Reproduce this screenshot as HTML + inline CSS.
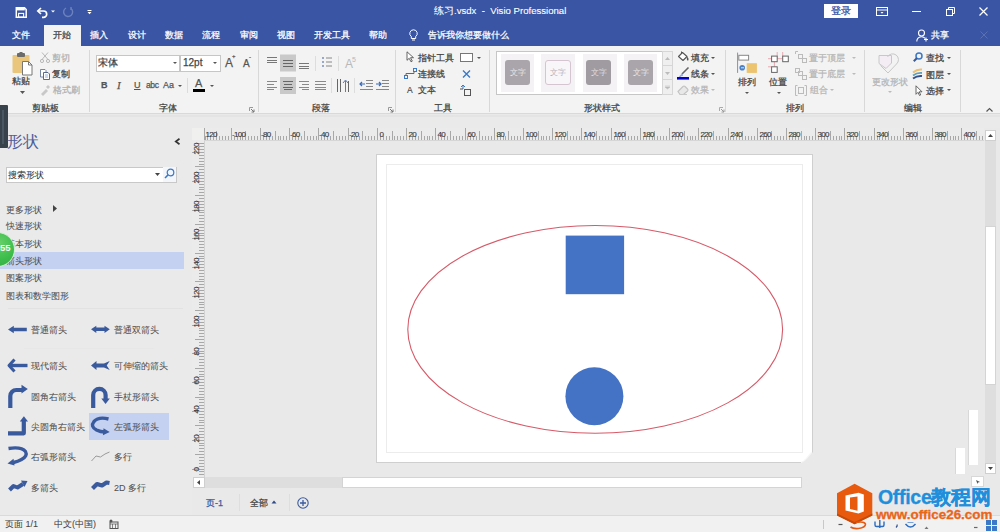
<!DOCTYPE html>
<html><head><meta charset="utf-8">
<style>
*{margin:0;padding:0;box-sizing:border-box}
html,body{width:1000px;height:532px;overflow:hidden;background:#e9e9e9;font-family:"Liberation Sans",sans-serif;color:#444;position:relative}
.a{position:absolute;white-space:nowrap}
.t{position:absolute;white-space:nowrap;font-size:9px;line-height:12px;-webkit-text-stroke:0.25px currentColor}
.w{color:#fff}
svg{position:absolute;overflow:visible}
#top{position:absolute;left:0;top:0;width:1000px;height:46px;background:#3955a3}
#rib{position:absolute;left:0;top:46px;width:1000px;height:68px;background:#f3f3f3;border-bottom:1px solid #d9d9d9}
#ribsh{position:absolute;left:0;top:115px;width:1000px;height:2px;background:#e4e4e4}
.sep{position:absolute;top:50px;width:1px;height:62px;background:#d8d8d8}
.gl{position:absolute;top:102px;font-size:9px;line-height:12px;color:#444;white-space:nowrap}
#pane{position:absolute;left:0;top:117px;width:192px;height:399px;background:#eaeaea}
</style></head><body>
<!-- TITLE BAR -->
<div id="top"></div>
<!-- save icon -->
<svg style="left:15px;top:7px" width="12" height="11" viewBox="0 0 12 11"><path d="M1.3 0.8h8.2l1.7 1.7v7.7H1.3z" fill="none" stroke="#fff" stroke-width="1.5"/><rect x="1.3" y="0.8" width="8.5" height="2.6" fill="#fff"/><rect x="3.6" y="6.4" width="5" height="3.8" fill="none" stroke="#fff" stroke-width="1.1"/></svg>
<!-- undo -->
<svg style="left:36px;top:7px" width="13" height="11" viewBox="0 0 13 11"><path d="M2.5 4h5a3.2 3.2 0 0 1 0 6.4H6" fill="none" stroke="#fff" stroke-width="1.7"/><path d="M5 1L1.8 4 5 7" fill="none" stroke="#fff" stroke-width="1.7"/></svg>
<svg style="left:51px;top:10px" width="4" height="3" viewBox="0 0 4 3"><path d="M0 0.5h4L2 2.5z" fill="#fff"/></svg>
<!-- redo disabled -->
<svg style="left:62px;top:6px" width="12" height="12" viewBox="0 0 12 12"><path d="M9 2.5A4.5 4.5 0 1 1 4 2" fill="none" stroke="#6c82be" stroke-width="1.4"/><path d="M9 1v3" stroke="#6c82be" stroke-width="1.4"/></svg>
<svg style="left:87px;top:10px" width="5" height="5" viewBox="0 0 5 5"><path d="M0.5 0.5h4" stroke="#fff" stroke-width="1"/><path d="M0.5 2h4L2.5 4.2z" fill="#fff"/></svg>
<div class="t w" style="left:434px;top:4px;font-size:9.6px;line-height:13px;-webkit-text-stroke:0.1px #fff">练习.vsdx&nbsp; - &nbsp;Visio Professional</div>
<div class="a" style="left:824px;top:4px;width:34px;height:14px;background:#fff;color:#3955a3;font-size:9.5px;line-height:14px;text-align:center;-webkit-text-stroke:0.3px #3955a3">登录</div>
<svg style="left:876px;top:7px" width="12" height="9" viewBox="0 0 12 9"><rect x="0.5" y="0.5" width="11" height="8" fill="none" stroke="#fff"/><path d="M0.5 3h11" stroke="#fff"/><path d="M4.5 5h3L6 6.8z" fill="#fff"/></svg>
<div class="a" style="left:912px;top:11px;width:9px;height:1px;background:#fff"></div>
<svg style="left:946px;top:7px" width="9" height="9" viewBox="0 0 9 9"><rect x="0.5" y="2.5" width="6" height="6" fill="none" stroke="#fff"/><path d="M2.5 2.5V0.5h6v6h-2" fill="none" stroke="#fff"/></svg>
<svg style="left:979px;top:7px" width="9" height="9" viewBox="0 0 9 9"><path d="M0.5 0.5l8 8M8.5 0.5l-8 8" stroke="#fff" stroke-width="1.2"/></svg>
<!-- TABS -->
<div class="a" style="left:44px;top:25px;width:37px;height:22px;background:#f3f3f3"></div>
<div class="t w" style="left:12px;top:29px">文件</div>
<div class="t" style="left:53px;top:29px;color:#444">开始</div>
<div class="t w" style="left:90px;top:29px">插入</div>
<div class="t w" style="left:128px;top:29px">设计</div>
<div class="t w" style="left:165px;top:29px">数据</div>
<div class="t w" style="left:202px;top:29px">流程</div>
<div class="t w" style="left:240px;top:29px">审阅</div>
<div class="t w" style="left:277px;top:29px">视图</div>
<div class="t w" style="left:314px;top:29px">开发工具</div>
<div class="t w" style="left:369px;top:29px">帮助</div>
<svg style="left:409px;top:29px" width="9" height="13" viewBox="0 0 9 13"><path d="M4.5 0.8a3.7 3.7 0 0 0-2.2 6.7V9.5h4.4V7.5A3.7 3.7 0 0 0 4.5 0.8z" fill="none" stroke="#fff" stroke-width="1"/><path d="M3 11h3" stroke="#fff"/></svg>
<div class="t w" style="left:428px;top:29px">告诉我你想要做什么</div>
<svg style="left:916px;top:29px" width="13" height="13" viewBox="0 0 13 13"><circle cx="5.5" cy="4" r="3" fill="none" stroke="#fff" stroke-width="1.1"/><path d="M0.8 12.5a4.8 4.8 0 0 1 8.5-3" fill="none" stroke="#fff" stroke-width="1.1"/><path d="M10 8.5v4M8 10.5h4" stroke="#fff" stroke-width="1.1"/></svg>
<div class="t w" style="left:931px;top:29px">共享</div>
<svg style="left:980px;top:31px" width="8" height="8" viewBox="0 0 8 8"><path d="M0.5 0.5l7 7M7.5 0.5l-7 7" stroke="#5a70b0" stroke-width="1"/></svg>

<!-- RIBBON -->
<div id="rib"></div>
<div id="ribsh"></div>
<!-- clipboard group -->
<svg style="left:12px;top:52px" width="21" height="24" viewBox="0 0 21 24"><rect x="0.5" y="3" width="17" height="18" rx="1" fill="#e9c67c"/><rect x="5" y="1" width="8" height="4" rx="1" fill="#6b6b6b"/><rect x="7.5" y="0" width="3" height="2" fill="#6b6b6b"/><path d="M10.5 9.5h6l3.5 3.5v10h-9.5z" fill="#fff" stroke="#777" stroke-width="1"/><path d="M16.5 9.5v3.5h3.5" fill="none" stroke="#777"/></svg>
<div class="t" style="left:12px;top:75px">粘贴</div>
<svg style="left:20px;top:91px" width="5" height="3" viewBox="0 0 5 3"><path d="M0 0h5L2.5 3z" fill="#555"/></svg>
<svg style="left:40px;top:52px" width="10" height="11" viewBox="0 0 10 11"><path d="M2 0.5l6 7M8 0.5l-6 7" stroke="#b8b8b8" stroke-width="1"/><circle cx="2" cy="9" r="1.6" fill="none" stroke="#b8b8b8"/><circle cx="8" cy="9" r="1.6" fill="none" stroke="#b8b8b8"/></svg>
<div class="t" style="left:52px;top:52px;color:#b0b0b0">剪切</div>
<svg style="left:40px;top:69px" width="10" height="11" viewBox="0 0 10 11"><path d="M0.5 0.5h4.5l1 1v6.5H0.5z" fill="#fff" stroke="#6a7a98" stroke-width="0.9"/><path d="M3.5 3.5h4.5l1.5 1.5v5.5h-6z" fill="#fff" stroke="#4a5a80" stroke-width="0.9"/><path d="M5 6h3M5 8h3" stroke="#7a9ad0" stroke-width="0.8"/></svg>
<div class="t" style="left:52px;top:68px">复制</div>
<svg style="left:40px;top:85px" width="10" height="10" viewBox="0 0 10 10"><path d="M1 9l5-5 2 2-5 5z" fill="#c8c8c8"/><path d="M6 2l2-2 2 2-2 2z" fill="#c8c8c8"/></svg>
<div class="t" style="left:53px;top:84px;color:#b0b0b0">格式刷</div>
<div class="t" style="left:32px;top:102px">剪贴板</div>
<div class="sep" style="left:89px"></div>
<!-- font group -->
<div class="a" style="left:96px;top:55px;width:84px;height:17px;background:#fff;border:1px solid #c6c6c6"></div>
<div class="t" style="left:98px;top:57px;font-size:10px">宋体</div>
<svg style="left:173px;top:62px" width="4" height="2" viewBox="0 0 4 2"><path d="M0 0h4L2 2z" fill="#555"/></svg>
<div class="a" style="left:180px;top:55px;width:41px;height:17px;background:#fff;border:1px solid #c6c6c6"></div>
<div class="t" style="left:183px;top:57px;font-size:10px">12pt</div>
<svg style="left:213px;top:62px" width="4" height="2" viewBox="0 0 4 2"><path d="M0 0h4L2 2z" fill="#555"/></svg>
<div class="t" style="left:225px;top:56px;font-size:12px;line-height:14px;color:#555">A</div>
<div class="t" style="left:232px;top:53px;font-size:6px;line-height:7px;color:#555">+</div>
<div class="t" style="left:243px;top:58px;font-size:10px;line-height:12px;color:#555">A</div>
<div class="t" style="left:249px;top:54px;font-size:6px;line-height:7px;color:#555">-</div>
<div class="t" style="left:101px;top:79px;font-weight:bold;color:#555">B</div>
<div class="t" style="left:117px;top:79px;font-style:italic;font-family:'Liberation Serif',serif;color:#555;font-size:11px">I</div>
<div class="t" style="left:134px;top:79px;text-decoration:underline;color:#555">U</div>
<div class="t" style="left:146px;top:79px;color:#555;font-size:8.5px;letter-spacing:-0.4px">abc</div>
<div class="t" style="left:163px;top:79px;color:#555">Aa</div>
<svg style="left:178px;top:85px" width="4" height="2" viewBox="0 0 4 2"><path d="M0 0h4L2 2z" fill="#555"/></svg>
<div class="a" style="left:187px;top:78px;width:1px;height:15px;background:#dcdcdc"></div>
<div class="t" style="left:195px;top:77px;color:#555;font-size:11px">A</div>
<div class="a" style="left:193px;top:89px;width:12px;height:2.5px;background:#000"></div>
<svg style="left:210px;top:85px" width="4" height="2" viewBox="0 0 4 2"><path d="M0 0h4L2 2z" fill="#555"/></svg>
<div class="t" style="left:159px;top:102px">字体</div>
<svg style="left:249px;top:107px" width="5" height="5" viewBox="0 0 5 5"><path d="M0.5 4V0.5H4" fill="none" stroke="#999"/><path d="M2 2l3 3M5 2.5V5H2.5" fill="none" stroke="#777"/></svg>
<div class="sep" style="left:258px"></div>
<!-- paragraph group -->
<svg style="left:266px;top:54px" width="128" height="42" viewBox="0 0 128 42">
 <g stroke="#777" stroke-width="1">
  <path d="M1 3.5h10M1 6.5h10M1 8.5h10"/>
 </g>
 <rect x="14" y="0.5" width="16" height="17" fill="#c9c9c9"/>
 <g stroke="#666" stroke-width="1"><path d="M17 6.5h10M17 9.5h10M17 12.5h10"/></g>
 <g stroke="#777" stroke-width="1"><path d="M33 9.5h10M33 12.5h10M33 14.5h10"/></g>
 <path d="M49.5 2v15" stroke="#ddd"/>
 <g fill="#7a8fb8"><circle cx="57" cy="4" r="1"/><circle cx="57" cy="8" r="1"/><circle cx="57" cy="12" r="1"/></g>
 <g stroke="#888"><path d="M60 4h6M60 8h6M60 12h6"/></g>
 <path d="M72.5 2v15" stroke="#ddd"/>
 <text x="79" y="14" font-size="12" fill="#b8b8b8" font-family="Liberation Sans">A</text>
 <text x="86" y="8" font-size="7" fill="#b8b8b8" font-family="Liberation Sans">5</text>
 <g stroke="#888"><path d="M1 27.5h10M1 30.5h7M1 33.5h10M1 35.5h7"/></g>
 <rect x="14" y="23" width="16" height="17" fill="#c9c9c9"/>
 <g stroke="#666"><path d="M17 27.5h10M18 30.5h8M17 33.5h10M18 35.5h8"/></g>
 <g stroke="#888"><path d="M33 27.5h10M36 30.5h7M33 33.5h10M36 35.5h7"/></g>
 <g stroke="#888"><path d="M49 27.5h11M49 30.5h11M49 33.5h11M49 35.5h11"/></g>
 <path d="M65.5 24v15" stroke="#ddd"/>
 <g stroke="#666"><path d="M71.5 25v13M74.5 25v13"/></g>
 <path d="M79.5 38v-11M77 29l2.5-3 2.5 3" fill="none" stroke="#5a7ab8"/><path d="M82.5 38v-11" stroke="#666"/>
 <path d="M88.5 24v15" stroke="#ddd"/>
 <g stroke="#888"><path d="M100 26.5h7M100 29.5h7M100 32.5h7M94 35.5h13"/></g>
 <path d="M99 30h-5M96 28l-2 2 2 2" fill="none" stroke="#3a6ab8" stroke-width="1.2"/>
 <g stroke="#888"><path d="M116 26.5h7M116 29.5h7M116 32.5h7M110 35.5h13"/></g>
 <path d="M110 30h5M113 28l2 2-2 2" fill="none" stroke="#3a6ab8" stroke-width="1.2"/>
</svg>
<div class="t" style="left:312px;top:102px">段落</div>
<svg style="left:388px;top:107px" width="5" height="5" viewBox="0 0 5 5"><path d="M0.5 4V0.5H4" fill="none" stroke="#999"/><path d="M2 2l3 3M5 2.5V5H2.5" fill="none" stroke="#777"/></svg>
<div class="sep" style="left:395px"></div>
<!-- tools group -->
<svg style="left:406px;top:51px" width="9" height="11" viewBox="0 0 9 11"><path d="M1 0.8v8.5l2.2-2 1.8 3.5 1.3-.7-1.8-3.4h3z" fill="#fff" stroke="#555" stroke-width="0.9"/></svg>
<div class="t" style="left:418px;top:52px">指针工具</div>
<div class="a" style="left:460px;top:53px;width:13px;height:9px;border:1px solid #777;background:#fff"></div>
<svg style="left:477px;top:57px" width="4" height="2" viewBox="0 0 4 2"><path d="M0 0h4L2 2z" fill="#555"/></svg>
<svg style="left:404px;top:68px" width="13" height="12" viewBox="0 0 13 12"><rect x="0.5" y="7.5" width="3" height="3" fill="none" stroke="#3a78c8"/><rect x="9.5" y="0.5" width="3" height="3" fill="none" stroke="#3a78c8"/><path d="M2 7.5V5.5h8V3.5" fill="none" stroke="#666"/></svg>
<div class="t" style="left:418px;top:68px">连接线</div>
<svg style="left:462px;top:70px" width="9" height="8" viewBox="0 0 9 8"><path d="M1 0.5l7 7M8 0.5l-7 7" stroke="#3a78c8" stroke-width="1.4"/></svg>
<div class="t" style="left:407px;top:84px;font-size:8.5px;color:#444;-webkit-text-stroke:0.15px #444">A</div>
<div class="t" style="left:418px;top:84px">文本</div>
<svg style="left:460px;top:85px" width="12" height="12" viewBox="0 0 12 12"><rect x="4.5" y="4.5" width="6" height="6" fill="none" stroke="#555"/><path d="M3 0v4M1 2l2-2 2 2" fill="none" stroke="#3a78c8"/><path d="M0 4h3" stroke="#555"/></svg>
<div class="t" style="left:434px;top:102px">工具</div>
<div class="sep" style="left:489px"></div>
<!-- shape styles -->
<div class="a" style="left:496px;top:51px;width:177px;height:44px;background:#fff;border:1px solid #c6c6c6"></div>
<div class="a" style="left:501px;top:54px;width:33px;height:38px;background:#f5f2f5"></div>
<div class="a" style="left:541px;top:54px;width:34px;height:38px;background:#f5f2f5"></div>
<div class="a" style="left:583px;top:54px;width:34px;height:38px;background:#f5f2f5"></div>
<div class="a" style="left:624px;top:54px;width:33px;height:38px;background:#f5f2f5"></div>
<div class="a" style="left:505px;top:60px;width:25px;height:25px;background:#a9a5aa;border-radius:3px;color:#e8e6e8;font-size:7.5px;line-height:25px;text-align:center">文字</div>
<div class="a" style="left:545px;top:60px;width:26px;height:25px;background:#f9f6f9;border:1px solid #d5c5d0;border-radius:3px;color:#b8b0b8;font-size:7.5px;line-height:23px;text-align:center">文字</div>
<div class="a" style="left:586px;top:60px;width:25px;height:25px;background:#9f9ba0;border-radius:3px;color:#e0dde0;font-size:7.5px;line-height:25px;text-align:center">文字</div>
<div class="a" style="left:628px;top:60px;width:25px;height:25px;background:#a9a5aa;border-radius:3px;color:#e8e6e8;font-size:7.5px;line-height:25px;text-align:center">文字</div>
<div class="a" style="left:662px;top:51px;width:11px;height:15px;background:#efefef;border:1px solid #d6d6d6"></div>
<div class="a" style="left:662px;top:65px;width:11px;height:15px;background:#efefef;border:1px solid #d6d6d6"></div>
<div class="a" style="left:662px;top:79px;width:11px;height:16px;background:#efefef;border:1px solid #d6d6d6"></div>
<svg style="left:665px;top:57px" width="5" height="3"><path d="M0 3h5L2.5 0z" fill="#bbb"/></svg>
<svg style="left:665px;top:72px" width="5" height="3"><path d="M0 0h5L2.5 3z" fill="#bbb"/></svg>
<svg style="left:665px;top:86px" width="5" height="3"><path d="M0 0h5M0 1h5L2.5 3z" stroke="#bbb" stroke-width="0.5" fill="#bbb"/></svg>
<svg style="left:677px;top:50px" width="13" height="12" viewBox="0 0 13 12"><path d="M4.5 1.5v3" stroke="#555" stroke-width="1"/><path d="M1.5 6.5L5.5 2.5 10 6.5 6 10.5z" fill="#fff" stroke="#555" stroke-width="1.1" stroke-linejoin="round"/><path d="M10 6.5q2 1.5 1.5 3.5q-.8 1-1.5 0q-.5-1.5 0-3.5z" fill="#555"/></svg>
<div class="t" style="left:691px;top:52px">填充</div>
<svg style="left:711px;top:57px" width="4" height="2"><path d="M0 0h4L2 2z" fill="#555"/></svg>
<svg style="left:677px;top:67px" width="13" height="13" viewBox="0 0 13 13"><path d="M11.5 0.5L5 7" stroke="#666" stroke-width="1.6"/><path d="M5 7L2.5 10l3.5-1.8z" fill="#4a6ac8"/><path d="M2.5 10l3-3" stroke="#9fb0e0" stroke-width="1.6"/><rect x="0" y="10" width="12" height="2.6" fill="#0000c8"/></svg>
<div class="t" style="left:691px;top:68px">线条</div>
<svg style="left:711px;top:73px" width="4" height="2"><path d="M0 0h4L2 2z" fill="#555"/></svg>
<svg style="left:677px;top:85px" width="12" height="11" viewBox="0 0 12 11"><path d="M1 6.5L6 1.5q1-1 2 0l2.5 2.5q1 1 0 2L6.5 9.5H3z" fill="#e8e8e8" stroke="#c2c2c2" stroke-width="1.1"/><path d="M3 9.5h7" stroke="#c8c8c8"/></svg>
<div class="t" style="left:691px;top:84px;color:#b5b5b5">效果</div>
<svg style="left:711px;top:89px" width="4" height="2"><path d="M0 0h4L2 2z" fill="#bbb"/></svg>
<div class="t" style="left:584px;top:102px">形状样式</div>
<svg style="left:719px;top:107px" width="5" height="5" viewBox="0 0 5 5"><path d="M0.5 4V0.5H4" fill="none" stroke="#aaa"/><path d="M2 2l3 3M5 2.5V5H2.5" fill="none" stroke="#999"/></svg>
<div class="sep" style="left:725px"></div>
<!-- arrange -->
<svg style="left:736px;top:52px" width="22" height="22" viewBox="736 52 22 22"><path d="M737.6 52.6v20.3" stroke="#8090b8" stroke-width="1"/><rect x="738.8" y="55.3" width="9.8" height="4.8" fill="#fff" stroke="#888" stroke-width="1"/><rect x="746.7" y="63.2" width="10.2" height="9.7" fill="#ecc36e"/><circle cx="742.2" cy="67.8" r="2.8" fill="#4a80c8"/><path d="M741 67.8h3" stroke="#fff" stroke-width="0.8"/></svg>
<div class="t" style="left:738px;top:76px">排列</div>
<svg style="left:745px;top:92px" width="4" height="2"><path d="M0 0h4L2 2z" fill="#555"/></svg>
<svg style="left:767px;top:51px" width="23" height="23" viewBox="767 51 23 23"><g stroke="#e9a0a8" stroke-width="0.9" fill="none"><path d="M768 58.7h14.5M777.2 52v6.7M782.7 52v6.7M768 66.8h3.6M774.4 61.7v5"/></g><g fill="#fff" stroke="#666" stroke-width="1"><rect x="771.6" y="56.1" width="5.6" height="5.6"/><rect x="782.7" y="56.1" width="5.6" height="5.6"/><rect x="771.6" y="66.8" width="5.6" height="5.6"/></g></svg>
<div class="t" style="left:769px;top:76px">位置</div>
<svg style="left:777px;top:92px" width="4" height="2"><path d="M0 0h4L2 2z" fill="#555"/></svg>
<svg style="left:795px;top:51px" width="12" height="12" viewBox="0 0 12 12"><path d="M0.5 3V0.5H3" fill="none" stroke="#bbb"/><rect x="3.5" y="3.5" width="4" height="4" fill="none" stroke="#bbb"/><rect x="7.5" y="7.5" width="4" height="4" fill="none" stroke="#bbb"/></svg>
<div class="t" style="left:809px;top:52px;color:#b5b5b5">置于顶层</div>
<svg style="left:852px;top:57px" width="4" height="2"><path d="M0 0h4L2 2z" fill="#bbb"/></svg>
<svg style="left:795px;top:68px" width="12" height="12" viewBox="0 0 12 12"><rect x="0.5" y="0.5" width="4" height="4" fill="none" stroke="#bbb"/><rect x="3.5" y="3.5" width="4" height="4" fill="none" stroke="#bbb"/><rect x="7.5" y="7.5" width="4" height="4" fill="none" stroke="#bbb"/></svg>
<div class="t" style="left:809px;top:68px;color:#b5b5b5">置于底层</div>
<svg style="left:852px;top:73px" width="4" height="2"><path d="M0 0h4L2 2z" fill="#bbb"/></svg>
<svg style="left:795px;top:85px" width="12" height="11" viewBox="0 0 12 11"><path d="M2.5 0.5h-2v10h2M9.5 0.5h2v10h-2" fill="none" stroke="#bbb"/><rect x="3.5" y="2.5" width="5" height="6" fill="none" stroke="#bbb"/></svg>
<div class="t" style="left:810px;top:84px;color:#b5b5b5">组合</div>
<svg style="left:830px;top:89px" width="4" height="2"><path d="M0 0h4L2 2z" fill="#bbb"/></svg>
<div class="t" style="left:786px;top:102px">排列</div>
<div class="sep" style="left:864px"></div>
<!-- editing -->
<svg style="left:876px;top:50px" width="26" height="26" viewBox="876 50 26 26"><path d="M879 55.5h12.5v7.5L886 68.5 879 63.5z" fill="#f4eef4" stroke="#c8c8c8" stroke-width="1"/><path d="M888 73l-7.5-7.5 M888 73l8.5-9a5.8 5.8 0 1 0-9-7" fill="none" stroke="#c8c8c8" stroke-width="1"/></svg>
<div class="t" style="left:872px;top:76px;color:#b5b5b5">更改形状</div>
<svg style="left:888px;top:91px" width="4" height="2"><path d="M0 0h4L2 2z" fill="#bbb"/></svg>
<svg style="left:913px;top:52px" width="10" height="10" viewBox="0 0 10 10"><circle cx="6" cy="4" r="3" fill="none" stroke="#3a78c8" stroke-width="1.5"/><path d="M4 6L0.8 9.2" stroke="#3a5a98" stroke-width="2"/></svg>
<div class="t" style="left:926px;top:52px">查找</div>
<svg style="left:947px;top:57px" width="4" height="2"><path d="M0 0h4L2 2z" fill="#555"/></svg>
<svg style="left:912px;top:68px" width="11" height="12" viewBox="0 0 11 12"><path d="M1 4.5q4-3.5 9-3" stroke="#f0c070" stroke-width="2" fill="none"/><path d="M1 7.5q4-3 9-2.5" stroke="#5aa0c0" stroke-width="1.8" fill="none"/><path d="M1 10.5q4-3 9-2.5" stroke="#34508a" stroke-width="1.9" fill="none"/></svg>
<div class="t" style="left:926px;top:69px">图层</div>
<svg style="left:947px;top:73px" width="4" height="2"><path d="M0 0h4L2 2z" fill="#555"/></svg>
<svg style="left:915px;top:85px" width="8" height="11" viewBox="0 0 8 11"><path d="M1 0.8v8.5l2-2 1.5 3.2 1.2-.6-1.5-3.1h2.8z" fill="#fff" stroke="#555" stroke-width="0.9"/></svg>
<div class="t" style="left:926px;top:85px">选择</div>
<svg style="left:947px;top:89px" width="4" height="2"><path d="M0 0h4L2 2z" fill="#555"/></svg>
<div class="t" style="left:904px;top:102px">编辑</div>
<div class="sep" style="left:960px"></div>
<svg style="left:986px;top:108px" width="7" height="4" viewBox="0 0 7 4"><path d="M0.5 3.5l3-3 3 3" fill="none" stroke="#555" stroke-width="1.2"/></svg>

<div id="pane"></div>
<div class="a" style="left:0;top:105px;width:8px;height:43px;background:#38424c;border-radius:0 1px 1px 0"></div>
<div class="a" style="left:2px;top:110px;width:2px;height:34px;background:#4a5662"></div>
<div class="a" style="left:7px;top:133px;font-size:16px;line-height:18px;color:#4f5e9c">形状</div>
<svg style="left:174px;top:138px" width="7" height="7" viewBox="0 0 7 7"><path d="M5.5 0.8L1.8 3.5 5.5 6.2" fill="none" stroke="#333" stroke-width="1.7"/></svg>
<div class="a" style="left:6px;top:167px;width:171px;height:16px;background:#fff;border:1px solid #c8c8c8"></div>
<div class="t" style="left:8px;top:169px;font-size:9px;-webkit-text-stroke:0.05px currentColor;color:#505050;color:#333">搜索形状</div>
<svg style="left:155px;top:173px" width="5" height="3"><path d="M0 0h5L2.5 3z" fill="#444"/></svg>
<div class="a" style="left:163px;top:167px;width:13px;height:15px;background:#f3f6fa"></div>
<svg style="left:164px;top:168px" width="11" height="11" viewBox="0 0 11 11"><circle cx="6.5" cy="4.5" r="3.3" fill="none" stroke="#3a78c8" stroke-width="1.2"/><path d="M4.2 6.8L1 10" stroke="#3a78c8" stroke-width="1.6"/></svg>
<div class="t" style="left:6px;top:204px;font-size:9px;-webkit-text-stroke:0.05px currentColor;color:#505050">更多形状</div>
<svg style="left:53px;top:205px" width="4" height="7"><path d="M0 0v7l4-3.5z" fill="#444"/></svg>
<div class="t" style="left:6px;top:220px;font-size:9px;-webkit-text-stroke:0.05px currentColor;color:#505050">快速形状</div>
<div class="t" style="left:6px;top:238px;font-size:9px;-webkit-text-stroke:0.05px currentColor;color:#505050">基本形状</div>
<div class="a" style="left:0;top:252px;width:184px;height:17px;background:#c5d1f0"></div>
<div class="t" style="left:6px;top:255px;font-size:9px;-webkit-text-stroke:0.05px currentColor;color:#505050">箭头形状</div>
<div class="t" style="left:6px;top:272px;font-size:9px;-webkit-text-stroke:0.05px currentColor;color:#505050">图案形状</div>
<div class="t" style="left:6px;top:290px;font-size:9px;-webkit-text-stroke:0.05px currentColor;color:#505050">图表和数学图形</div>
<div class="a" style="left:-20px;top:232px;width:35px;height:35px;border-radius:50%;background:radial-gradient(circle at 55% 30%,#66d068,#3dbd4c 55%,#32a840);border:1.5px solid #cfeecf"></div>
<div class="t" style="left:0px;top:242px;font-size:9.5px;font-weight:bold;color:#f4fff4;-webkit-text-stroke:0">55</div>
<div class="a" style="left:8px;top:308px;width:175px;height:1px;background:#e2e2e2"></div>
<div class="a" style="left:24px;top:348px;width:130px;height:1px;background:#e7e7e7"></div>
<div class="a" style="left:89px;top:413px;width:80px;height:27px;background:#c5d1f0"></div>
<!-- shape icons -->
<svg style="left:0;top:300px" width="185" height="200" viewBox="0 300 185 200">
 <g fill="#3a5a9e">
  <path d="M8 329.5l5.8-3.8v2h13v3.6h-13v2z"/>
  <path d="M91 329.3l5.3-3.6v1.8h8.2v-1.8l5.3 3.6-5.3 3.6v-1.8h-8.2v1.8z"/>
  <path d="M91 365.5l5.5-4.5v2.6h7.5l5.7-2.5-3 4.4 3 4.4-5.7-2.5h-7.5v2.6z"/>
  <path d="M21.5 384.8l6.3 4.3-6.3 4.3z"/>
  <path d="M101.3 398.5h8.5l-4.25 5.5z"/>
  <path d="M19.8 421.5l4.1-5.2 4.1 5.2z"/>
  <path d="M103.5 428.3l6.2 3.7-6.8 3.2z"/>
  <path d="M13.5 458.8l-6 4.6 7 2.2z"/>
  <path d="M21 480.5l6.5 0.5-3 6z"/>
 </g>
 <g fill="none" stroke="#3a5a9e" stroke-linejoin="round">
  <path d="M9.5 365.5h18" stroke-width="3.4"/>
  <path d="M14.5 359.5l-5.5 6 5.5 6" stroke-width="3"/>
  <path d="M10.3 408v-12a6 6 0 0 1 6-6h6" stroke-width="4.2"/>
  <path d="M93.2 408v-13a6.2 6.2 0 0 1 12.4 0v4" stroke-width="4.2"/>
  <path d="M8 433.3h15.8v-12.5" stroke-width="4.2"/>
  <path d="M108.5 419q-10-2.5-14.5 2.5q-4 5 2.5 8.5q4 2 8.5 2" stroke-width="3.4"/>
  <path d="M8.5 448.5q13-2 17 3q2.5 4.5-4 8q-3.5 2-8 3" stroke-width="3.4"/>
  <path d="M9.5 490l4-4 4 1.5 5.5-3.5" stroke-width="4"/>
  <path d="M92.5 488.5l4.5-4.5 5 1.5 4.5-3 3 .5" stroke-width="4.2"/>
 </g>
 <path d="M91.5 461l4.5-5 4.5 1 4.5-3 4.5-2" fill="none" stroke="#9a9a9a" stroke-width="1"/>
</svg>
<div class="t" style="left:31px;top:324px;font-size:9px;-webkit-text-stroke:0.05px currentColor;color:#505050">普通箭头</div>
<div class="t" style="left:114px;top:324px;font-size:9px;-webkit-text-stroke:0.05px currentColor;color:#505050">普通双箭头</div>
<div class="t" style="left:31px;top:360px;font-size:9px;-webkit-text-stroke:0.05px currentColor;color:#505050">现代箭头</div>
<div class="t" style="left:114px;top:360px;font-size:9px;-webkit-text-stroke:0.05px currentColor;color:#505050">可伸缩的箭头</div>
<div class="t" style="left:31px;top:391px;font-size:9px;-webkit-text-stroke:0.05px currentColor;color:#505050">圆角右箭头</div>
<div class="t" style="left:114px;top:391px;font-size:9px;-webkit-text-stroke:0.05px currentColor;color:#505050">手杖形箭头</div>
<div class="t" style="left:31px;top:421px;font-size:9px;-webkit-text-stroke:0.05px currentColor;color:#505050">尖圆角右箭头</div>
<div class="t" style="left:114px;top:421px;font-size:9px;-webkit-text-stroke:0.05px currentColor;color:#505050">左弧形箭头</div>
<div class="t" style="left:31px;top:451px;font-size:9px;-webkit-text-stroke:0.05px currentColor;color:#505050">右弧形箭头</div>
<div class="t" style="left:114px;top:451px;font-size:9px;-webkit-text-stroke:0.05px currentColor;color:#505050">多行</div>
<div class="t" style="left:31px;top:482px;font-size:9px;-webkit-text-stroke:0.05px currentColor;color:#505050">多箭头</div>
<div class="t" style="left:114px;top:482px;font-size:9px;-webkit-text-stroke:0.05px currentColor;color:#505050">2D 多行</div>

<!-- RULERS -->
<div class="a" style="left:192px;top:117px;width:808px;height:11px;background:#eaeaea"></div>
<div class="a" style="left:192px;top:128px;width:792px;height:13px;background:#ebebeb"></div>
<div class="a" style="left:192px;top:128px;width:12px;height:352px;background:#ebebeb"></div>
<div class="a" style="left:192px;top:128px;width:12px;height:12px;background:#f0f0ee"></div>
<svg id="rulers" style="left:0;top:0" width="1000" height="532" viewBox="0 0 1000 532">
<g stroke="#a8a8a8" stroke-width="1" shape-rendering="crispEdges">
<path d="M204.5 128V140"/>
<path d="M205.5 136V140"/>
<path d="M207.5 136V140"/>
<path d="M210.5 136V140"/>
<path d="M213.5 136V140"/>
<path d="M216.5 130.5V140"/>
<path d="M219.5 136V140"/>
<path d="M222.5 136V140"/>
<path d="M225.5 136V140"/>
<path d="M228.5 136V140"/>
<path d="M231.5 128V140"/>
<path d="M234.5 136V140"/>
<path d="M237.5 136V140"/>
<path d="M240.5 136V140"/>
<path d="M242.5 136V140"/>
<path d="M245.5 130.5V140"/>
<path d="M248.5 136V140"/>
<path d="M251.5 136V140"/>
<path d="M254.5 136V140"/>
<path d="M257.5 136V140"/>
<path d="M260.5 128V140"/>
<path d="M263.5 136V140"/>
<path d="M266.5 136V140"/>
<path d="M269.5 136V140"/>
<path d="M272.5 136V140"/>
<path d="M275.5 130.5V140"/>
<path d="M278.5 136V140"/>
<path d="M280.5 136V140"/>
<path d="M283.5 136V140"/>
<path d="M286.5 136V140"/>
<path d="M289.5 128V140"/>
<path d="M292.5 136V140"/>
<path d="M295.5 136V140"/>
<path d="M298.5 136V140"/>
<path d="M301.5 136V140"/>
<path d="M304.5 130.5V140"/>
<path d="M307.5 136V140"/>
<path d="M310.5 136V140"/>
<path d="M313.5 136V140"/>
<path d="M316.5 136V140"/>
<path d="M318.5 128V140"/>
<path d="M321.5 136V140"/>
<path d="M324.5 136V140"/>
<path d="M327.5 136V140"/>
<path d="M330.5 136V140"/>
<path d="M333.5 130.5V140"/>
<path d="M336.5 136V140"/>
<path d="M339.5 136V140"/>
<path d="M342.5 136V140"/>
<path d="M345.5 136V140"/>
<path d="M348.5 128V140"/>
<path d="M351.5 136V140"/>
<path d="M354.5 136V140"/>
<path d="M356.5 136V140"/>
<path d="M359.5 136V140"/>
<path d="M362.5 130.5V140"/>
<path d="M365.5 136V140"/>
<path d="M368.5 136V140"/>
<path d="M371.5 136V140"/>
<path d="M374.5 136V140"/>
<path d="M377.5 128V140"/>
<path d="M380.5 136V140"/>
<path d="M383.5 136V140"/>
<path d="M386.5 136V140"/>
<path d="M389.5 136V140"/>
<path d="M392.5 130.5V140"/>
<path d="M394.5 136V140"/>
<path d="M397.5 136V140"/>
<path d="M400.5 136V140"/>
<path d="M403.5 136V140"/>
<path d="M406.5 128V140"/>
<path d="M409.5 136V140"/>
<path d="M412.5 136V140"/>
<path d="M415.5 136V140"/>
<path d="M418.5 136V140"/>
<path d="M421.5 130.5V140"/>
<path d="M424.5 136V140"/>
<path d="M427.5 136V140"/>
<path d="M429.5 136V140"/>
<path d="M432.5 136V140"/>
<path d="M435.5 128V140"/>
<path d="M438.5 136V140"/>
<path d="M441.5 136V140"/>
<path d="M444.5 136V140"/>
<path d="M447.5 136V140"/>
<path d="M450.5 130.5V140"/>
<path d="M453.5 136V140"/>
<path d="M456.5 136V140"/>
<path d="M459.5 136V140"/>
<path d="M462.5 136V140"/>
<path d="M465.5 128V140"/>
<path d="M467.5 136V140"/>
<path d="M470.5 136V140"/>
<path d="M473.5 136V140"/>
<path d="M476.5 136V140"/>
<path d="M479.5 130.5V140"/>
<path d="M482.5 136V140"/>
<path d="M485.5 136V140"/>
<path d="M488.5 136V140"/>
<path d="M491.5 136V140"/>
<path d="M494.5 128V140"/>
<path d="M497.5 136V140"/>
<path d="M500.5 136V140"/>
<path d="M503.5 136V140"/>
<path d="M505.5 136V140"/>
<path d="M508.5 130.5V140"/>
<path d="M511.5 136V140"/>
<path d="M514.5 136V140"/>
<path d="M517.5 136V140"/>
<path d="M520.5 136V140"/>
<path d="M523.5 128V140"/>
<path d="M526.5 136V140"/>
<path d="M529.5 136V140"/>
<path d="M532.5 136V140"/>
<path d="M535.5 136V140"/>
<path d="M538.5 130.5V140"/>
<path d="M541.5 136V140"/>
<path d="M543.5 136V140"/>
<path d="M546.5 136V140"/>
<path d="M549.5 136V140"/>
<path d="M552.5 128V140"/>
<path d="M555.5 136V140"/>
<path d="M558.5 136V140"/>
<path d="M561.5 136V140"/>
<path d="M564.5 136V140"/>
<path d="M567.5 130.5V140"/>
<path d="M570.5 136V140"/>
<path d="M573.5 136V140"/>
<path d="M576.5 136V140"/>
<path d="M579.5 136V140"/>
<path d="M581.5 128V140"/>
<path d="M584.5 136V140"/>
<path d="M587.5 136V140"/>
<path d="M590.5 136V140"/>
<path d="M593.5 136V140"/>
<path d="M596.5 130.5V140"/>
<path d="M599.5 136V140"/>
<path d="M602.5 136V140"/>
<path d="M605.5 136V140"/>
<path d="M608.5 136V140"/>
<path d="M611.5 128V140"/>
<path d="M614.5 136V140"/>
<path d="M617.5 136V140"/>
<path d="M619.5 136V140"/>
<path d="M622.5 136V140"/>
<path d="M625.5 130.5V140"/>
<path d="M628.5 136V140"/>
<path d="M631.5 136V140"/>
<path d="M634.5 136V140"/>
<path d="M637.5 136V140"/>
<path d="M640.5 128V140"/>
<path d="M643.5 136V140"/>
<path d="M646.5 136V140"/>
<path d="M649.5 136V140"/>
<path d="M652.5 136V140"/>
<path d="M654.5 130.5V140"/>
<path d="M657.5 136V140"/>
<path d="M660.5 136V140"/>
<path d="M663.5 136V140"/>
<path d="M666.5 136V140"/>
<path d="M669.5 128V140"/>
<path d="M672.5 136V140"/>
<path d="M675.5 136V140"/>
<path d="M678.5 136V140"/>
<path d="M681.5 136V140"/>
<path d="M684.5 130.5V140"/>
<path d="M687.5 136V140"/>
<path d="M690.5 136V140"/>
<path d="M692.5 136V140"/>
<path d="M695.5 136V140"/>
<path d="M698.5 128V140"/>
<path d="M701.5 136V140"/>
<path d="M704.5 136V140"/>
<path d="M707.5 136V140"/>
<path d="M710.5 136V140"/>
<path d="M713.5 130.5V140"/>
<path d="M716.5 136V140"/>
<path d="M719.5 136V140"/>
<path d="M722.5 136V140"/>
<path d="M725.5 136V140"/>
<path d="M728.5 128V140"/>
<path d="M730.5 136V140"/>
<path d="M733.5 136V140"/>
<path d="M736.5 136V140"/>
<path d="M739.5 136V140"/>
<path d="M742.5 130.5V140"/>
<path d="M745.5 136V140"/>
<path d="M748.5 136V140"/>
<path d="M751.5 136V140"/>
<path d="M754.5 136V140"/>
<path d="M757.5 128V140"/>
<path d="M760.5 136V140"/>
<path d="M763.5 136V140"/>
<path d="M766.5 136V140"/>
<path d="M768.5 136V140"/>
<path d="M771.5 130.5V140"/>
<path d="M774.5 136V140"/>
<path d="M777.5 136V140"/>
<path d="M780.5 136V140"/>
<path d="M783.5 136V140"/>
<path d="M786.5 128V140"/>
<path d="M789.5 136V140"/>
<path d="M792.5 136V140"/>
<path d="M795.5 136V140"/>
<path d="M798.5 136V140"/>
<path d="M801.5 130.5V140"/>
<path d="M804.5 136V140"/>
<path d="M806.5 136V140"/>
<path d="M809.5 136V140"/>
<path d="M812.5 136V140"/>
<path d="M815.5 128V140"/>
<path d="M818.5 136V140"/>
<path d="M821.5 136V140"/>
<path d="M824.5 136V140"/>
<path d="M827.5 136V140"/>
<path d="M830.5 130.5V140"/>
<path d="M833.5 136V140"/>
<path d="M836.5 136V140"/>
<path d="M839.5 136V140"/>
<path d="M841.5 136V140"/>
<path d="M844.5 128V140"/>
<path d="M847.5 136V140"/>
<path d="M850.5 136V140"/>
<path d="M853.5 136V140"/>
<path d="M856.5 136V140"/>
<path d="M859.5 130.5V140"/>
<path d="M862.5 136V140"/>
<path d="M865.5 136V140"/>
<path d="M868.5 136V140"/>
<path d="M871.5 136V140"/>
<path d="M874.5 128V140"/>
<path d="M877.5 136V140"/>
<path d="M879.5 136V140"/>
<path d="M882.5 136V140"/>
<path d="M885.5 136V140"/>
<path d="M888.5 130.5V140"/>
<path d="M891.5 136V140"/>
<path d="M894.5 136V140"/>
<path d="M897.5 136V140"/>
<path d="M900.5 136V140"/>
<path d="M903.5 128V140"/>
<path d="M906.5 136V140"/>
<path d="M909.5 136V140"/>
<path d="M912.5 136V140"/>
<path d="M915.5 136V140"/>
<path d="M917.5 130.5V140"/>
<path d="M920.5 136V140"/>
<path d="M923.5 136V140"/>
<path d="M926.5 136V140"/>
<path d="M929.5 136V140"/>
<path d="M932.5 128V140"/>
<path d="M935.5 136V140"/>
<path d="M938.5 136V140"/>
<path d="M941.5 136V140"/>
<path d="M944.5 136V140"/>
<path d="M947.5 130.5V140"/>
<path d="M950.5 136V140"/>
<path d="M953.5 136V140"/>
<path d="M955.5 136V140"/>
<path d="M958.5 136V140"/>
<path d="M961.5 128V140"/>
<path d="M964.5 136V140"/>
<path d="M967.5 136V140"/>
<path d="M970.5 136V140"/>
<path d="M973.5 136V140"/>
<path d="M976.5 130.5V140"/>
<path d="M979.5 136V140"/>
<path d="M982.5 136V140"/>
<path d="M199 474.5H204"/>
<path d="M199 471.5H204"/>
<path d="M192 469.5H204"/>
<path d="M199 466.5H204"/>
<path d="M199 463.5H204"/>
<path d="M199 460.5H204"/>
<path d="M199 457.5H204"/>
<path d="M194.5 454.5H204"/>
<path d="M199 451.5H204"/>
<path d="M199 448.5H204"/>
<path d="M199 445.5H204"/>
<path d="M199 443.5H204"/>
<path d="M192 440.5H204"/>
<path d="M199 437.5H204"/>
<path d="M199 434.5H204"/>
<path d="M199 431.5H204"/>
<path d="M199 428.5H204"/>
<path d="M194.5 425.5H204"/>
<path d="M199 422.5H204"/>
<path d="M199 420.5H204"/>
<path d="M199 417.5H204"/>
<path d="M199 414.5H204"/>
<path d="M192 411.5H204"/>
<path d="M199 408.5H204"/>
<path d="M199 405.5H204"/>
<path d="M199 402.5H204"/>
<path d="M199 399.5H204"/>
<path d="M194.5 397.5H204"/>
<path d="M199 394.5H204"/>
<path d="M199 391.5H204"/>
<path d="M199 388.5H204"/>
<path d="M199 385.5H204"/>
<path d="M192 382.5H204"/>
<path d="M199 379.5H204"/>
<path d="M199 376.5H204"/>
<path d="M199 374.5H204"/>
<path d="M199 371.5H204"/>
<path d="M194.5 368.5H204"/>
<path d="M199 365.5H204"/>
<path d="M199 362.5H204"/>
<path d="M199 359.5H204"/>
<path d="M199 356.5H204"/>
<path d="M192 353.5H204"/>
<path d="M199 351.5H204"/>
<path d="M199 348.5H204"/>
<path d="M199 345.5H204"/>
<path d="M199 342.5H204"/>
<path d="M194.5 339.5H204"/>
<path d="M199 336.5H204"/>
<path d="M199 333.5H204"/>
<path d="M199 330.5H204"/>
<path d="M199 328.5H204"/>
<path d="M192 325.5H204"/>
<path d="M199 322.5H204"/>
<path d="M199 319.5H204"/>
<path d="M199 316.5H204"/>
<path d="M199 313.5H204"/>
<path d="M194.5 310.5H204"/>
<path d="M199 307.5H204"/>
<path d="M199 304.5H204"/>
<path d="M199 302.5H204"/>
<path d="M199 299.5H204"/>
<path d="M192 296.5H204"/>
<path d="M199 293.5H204"/>
<path d="M199 290.5H204"/>
<path d="M199 287.5H204"/>
<path d="M199 284.5H204"/>
<path d="M194.5 281.5H204"/>
<path d="M199 279.5H204"/>
<path d="M199 276.5H204"/>
<path d="M199 273.5H204"/>
<path d="M199 270.5H204"/>
<path d="M192 267.5H204"/>
<path d="M199 264.5H204"/>
<path d="M199 261.5H204"/>
<path d="M199 258.5H204"/>
<path d="M199 256.5H204"/>
<path d="M194.5 253.5H204"/>
<path d="M199 250.5H204"/>
<path d="M199 247.5H204"/>
<path d="M199 244.5H204"/>
<path d="M199 241.5H204"/>
<path d="M192 238.5H204"/>
<path d="M199 235.5H204"/>
<path d="M199 233.5H204"/>
<path d="M199 230.5H204"/>
<path d="M199 227.5H204"/>
<path d="M194.5 224.5H204"/>
<path d="M199 221.5H204"/>
<path d="M199 218.5H204"/>
<path d="M199 215.5H204"/>
<path d="M199 212.5H204"/>
<path d="M192 210.5H204"/>
<path d="M199 207.5H204"/>
<path d="M199 204.5H204"/>
<path d="M199 201.5H204"/>
<path d="M199 198.5H204"/>
<path d="M194.5 195.5H204"/>
<path d="M199 192.5H204"/>
<path d="M199 189.5H204"/>
<path d="M199 187.5H204"/>
<path d="M199 184.5H204"/>
<path d="M192 181.5H204"/>
<path d="M199 178.5H204"/>
<path d="M199 175.5H204"/>
<path d="M199 172.5H204"/>
<path d="M199 169.5H204"/>
<path d="M194.5 166.5H204"/>
<path d="M199 164.5H204"/>
<path d="M199 161.5H204"/>
<path d="M199 158.5H204"/>
<path d="M199 155.5H204"/>
<path d="M192 152.5H204"/>
<path d="M199 149.5H204"/>
<path d="M199 146.5H204"/>
<path d="M199 143.5H204"/>
<path d="M204.5 140V477" stroke="#d2d2d2"/><path d="M204 140.5H984" stroke="#d6d6d6"/>
</g>
<g font-family="Liberation Sans" font-size="8" fill="#3a3a3a" letter-spacing="-0.7" stroke="#3a3a3a" stroke-width="0.15">
<text x="205.5" y="137">120</text>
<text x="232.0" y="137">-100</text>
<text x="261.0" y="137">-80</text>
<text x="290.0" y="137">-60</text>
<text x="319.0" y="137">-40</text>
<text x="349.0" y="137">-20</text>
<text x="379.5" y="137">0</text>
<text x="408.5" y="137">20</text>
<text x="437.5" y="137">40</text>
<text x="467.5" y="137">60</text>
<text x="496.5" y="137">80</text>
<text x="525.5" y="137">100</text>
<text x="554.5" y="137">120</text>
<text x="583.5" y="137">140</text>
<text x="613.5" y="137">160</text>
<text x="642.5" y="137">180</text>
<text x="671.5" y="137">200</text>
<text x="700.5" y="137">220</text>
<text x="730.5" y="137">240</text>
<text x="759.5" y="137">260</text>
<text x="788.5" y="137">280</text>
<text x="817.5" y="137">300</text>
<text x="846.5" y="137">320</text>
<text x="876.5" y="137">340</text>
<text x="905.5" y="137">360</text>
<text x="934.5" y="137">380</text>
<text x="963.5" y="137">400</text>
<text transform="translate(198.5 471.5) rotate(-90)">0</text>
<text transform="translate(198.5 442.5) rotate(-90)">20</text>
<text transform="translate(198.5 413.5) rotate(-90)">40</text>
<text transform="translate(198.5 384.5) rotate(-90)">60</text>
<text transform="translate(198.5 355.5) rotate(-90)">80</text>
<text transform="translate(198.5 327.5) rotate(-90)">100</text>
<text transform="translate(198.5 298.5) rotate(-90)">120</text>
<text transform="translate(198.5 269.5) rotate(-90)">140</text>
<text transform="translate(198.5 240.5) rotate(-90)">160</text>
<text transform="translate(198.5 212.5) rotate(-90)">180</text>
<text transform="translate(198.5 183.5) rotate(-90)">200</text>
<text transform="translate(198.5 154.5) rotate(-90)">220</text>
</g></svg>

<!-- CANVAS -->
<div class="a" style="left:376px;top:154px;width:437px;height:309px;background:#fff;border:1px solid #cfcfcf"></div>
<div class="a" style="left:386px;top:164px;width:417px;height:289px;border:1px solid #ececec"></div>
<svg style="left:0;top:0" width="1000" height="532" viewBox="0 0 1000 532">
 <ellipse cx="595.2" cy="329.4" rx="187.4" ry="103.9" fill="none" stroke="#d65a68" stroke-width="1.1"/>
 <rect x="565.7" y="235.6" width="58.4" height="58.6" fill="#4472c4"/>
 <circle cx="594.4" cy="396.2" r="29" fill="#4472c4"/>
</svg>

<svg style="left:800px;top:450px" width="16" height="16" viewBox="800 450 16 16"><path d="M813.5 452.5V464H801V462.3q3-1 5-3.5t5.5-6.3z" fill="#e9e9e9"/><path d="M801 462.5q3-1 5-3.5t5.5-6.5" fill="none" stroke="#f6f6f6" stroke-width="1.2"/></svg>
<!-- scrollbars -->
<div class="a" style="left:985px;top:130px;width:11px;height:11px;background:#fff;border:1px solid #cfcfcf"></div>
<svg style="left:988px;top:134px" width="5" height="3"><path d="M0 3h5L2.5 0z" fill="#444"/></svg>
<div class="a" style="left:985px;top:141px;width:11px;height:323px;background:#dedede"></div>
<div class="a" style="left:985px;top:226px;width:11px;height:159px;background:#fff;border:1px solid #d4d4d4"></div>
<div class="a" style="left:985px;top:463px;width:11px;height:11px;background:#fff;border:1px solid #cfcfcf"></div>
<svg style="left:988px;top:467px" width="5" height="3"><path d="M0 0h5L2.5 3z" fill="#444"/></svg>
<div class="a" style="left:968px;top:410px;width:10px;height:55px;background:#fff;border-left:1px solid #d8d8d8"></div>
<div class="a" style="left:955px;top:448px;width:10px;height:26px;background:#fff;border-left:1px solid #d8d8d8"></div>
<div class="a" style="left:971px;top:476px;width:13px;height:11px;background:#fff;border:1px solid #d8d8d8"></div>
<svg style="left:976px;top:480px" width="4" height="4"><path d="M0 0l4 2-2 0.5-0.5 1.5z" fill="#555"/></svg>
<div class="a" style="left:193px;top:477px;width:12px;height:11px;background:#fff;border:1px solid #cfcfcf"></div>
<svg style="left:197px;top:480px" width="3" height="5"><path d="M3 0v5L0 2.5z" fill="#444"/></svg>
<div class="a" style="left:205px;top:477px;width:137px;height:11px;background:#dedede"></div>
<div class="a" style="left:342px;top:477px;width:460px;height:11px;background:#fff;border:1px solid #d4d4d4"></div>

<!-- page tabs -->
<div class="t" style="left:206px;top:497px;font-size:9px;color:#3b5aa0">页-1</div>
<div class="a" style="left:239px;top:494px;width:1px;height:17px;background:#dedede"></div>
<div class="t" style="left:250px;top:497px;font-size:9px;color:#444">全部</div>
<svg style="left:271px;top:500px" width="6" height="4"><path d="M0.5 3.5h5L3 0.5z" fill="#2f4a88"/></svg>
<div class="a" style="left:289px;top:494px;width:1px;height:17px;background:#dedede"></div>
<svg style="left:297px;top:497px" width="12" height="12" viewBox="0 0 12 12"><circle cx="6" cy="6" r="5.2" fill="none" stroke="#3b5aa0" stroke-width="1.1"/><path d="M6 3v6M3 6h6" stroke="#3b5aa0" stroke-width="1.3"/></svg>

<!-- status bar -->
<div class="a" style="left:0;top:515px;width:1000px;height:17px;background:#f1f1f1;border-top:1px solid #dadada"></div>
<div class="t" style="left:5px;top:518px;font-size:9px;-webkit-text-stroke:0.05px currentColor;color:#505050;color:#444">页面 1/1</div>
<div class="t" style="left:54px;top:518px;font-size:9px;-webkit-text-stroke:0.05px currentColor;color:#505050;color:#444">中文(中国)</div>
<svg style="left:109px;top:519px" width="10" height="10" viewBox="0 0 10 10"><rect x="1" y="3" width="8" height="6.5" fill="none" stroke="#555"/><path d="M1 5h8M3.5 5v4.5M6.5 5v4.5" stroke="#555" stroke-width="0.7"/><circle cx="2" cy="2" r="1.5" fill="#555"/></svg>
<div class="a" style="left:823px;top:520px;width:1px;height:9px;background:#c8c8c8"></div>
<svg style="left:986px;top:520px" width="12" height="11" viewBox="0 0 12 11"><rect x="0" y="0" width="5" height="5" fill="#3a78c8"/><rect x="6" y="0" width="5" height="5" fill="#3a78c8"/><rect x="0" y="6" width="5" height="5" fill="#3a78c8"/><rect x="6" y="6" width="5" height="5" fill="#3a78c8"/></svg>

<svg style="left:820px;top:517px" width="180" height="15" viewBox="820 517 180 15">
 <path d="M838.5 524.5h4" stroke="#555" stroke-width="1.2"/>
 <path d="M875 521.5v3.5q0 1.5 1.5 1.5h6q1.5 0 1.5-1.5v-3.5M879.8 520v8" fill="none" stroke="#2b6cc0" stroke-width="1.4"/>
 <path d="M897 524.5q0.8 1.5-1 3" fill="none" stroke="#2b4a8a" stroke-width="1.2"/>
 <path d="M905.5 524q5 6 10 0" fill="none" stroke="#2b6cc0" stroke-width="1.4"/>
 <path d="M907.5 522.5h6" stroke="#7aa0d8" stroke-width="1"/>
 <path d="M924.5 529l2-2.5 2 2.5z" fill="#777"/>
 <path d="M974 527.5h3.5" stroke="#666" stroke-width="1.2"/>
</svg>
<!-- watermark -->
<svg style="left:836px;top:483px" width="38" height="43" viewBox="836 483 38 43">
 <path d="M854.6 483.8L872.3 493.2V515.6L854.6 524.2 837 515.6V493.2z" fill="#e85b0e"/>
 <path d="M837 513.5L854.6 522V524.2L837 515.6z M872.3 513.5L854.6 522V524.2L872.3 515.6z" fill="#c44a0a"/>
 <path d="M845.5 495.5L858.5 492.8 863.8 494.5V511.5L858.5 513.5 845.5 510.5z" fill="#fff"/>
 <path d="M850 497.5L857.5 496.5V510.8L850 509z" fill="#e85b0e"/>
 <path d="M856 522.5q8-1.5 9.5 1.5q0 3.5-7 4.5q-5 0.5-8-1.5" fill="none" stroke="#e35a14" stroke-width="1.6"/>
</svg>
<div class="a" style="left:878px;top:486px;font-size:19.5px;line-height:22px;font-weight:bold;color:#1f8fdc;letter-spacing:-0.3px;-webkit-text-stroke:0.3px #1f8fdc">Office教程网</div>
<div class="a" style="left:876px;top:507px;font-size:13.4px;line-height:15px;font-weight:bold;color:#e8661a;letter-spacing:0px;-webkit-text-stroke:0.3px #e8661a">www.office26.com</div>

</body></html>
